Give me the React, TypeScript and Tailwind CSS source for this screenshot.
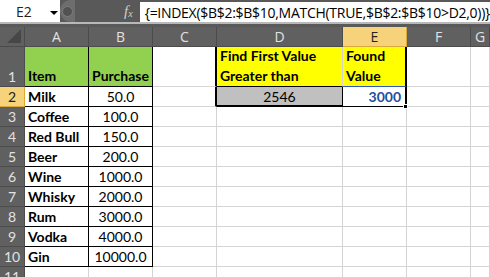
import React from "react";

const items: [string, string][] = [
  ["Milk", "50.0"],
  ["Coffee", "100.0"],
  ["Red Bull", "150.0"],
  ["Beer", "200.0"],
  ["Wine", "1000.0"],
  ["Whisky", "2000.0"],
  ["Rum", "3000.0"],
  ["Vodka", "4000.0"],
  ["Gin", "10000.0"],
];

const cellFont = { fontFamily: "Lato, 'Liberation Sans', sans-serif" };

const RowHead = ({ n, active = false, tall = false }: { n: number; active?: boolean; tall?: boolean }) => (
  <div
    className={`flex justify-center border-r border-b text-[14px] leading-[19px] ${tall ? "items-end" : "items-center"} ${
      active ? "bg-[#f6d27a] text-[#222] border-[#d9a93c]" : "bg-[#606060] text-[#e2e2e2] border-[#4c4c4c]"
    }`}
  >
    {n}
  </div>
);

const Grid = () => <div className="border-r border-b border-[#d4d4d4]" />;

export default function App() {
  return (
    <div className="w-[490px] h-[277px] overflow-hidden bg-white" style={{ fontFamily: "'Open Sans', sans-serif" }}>
      {/* formula bar */}
      <div className="h-[22px] flex bg-[#595959]">
        <div className="w-[63px] bg-white flex items-center pl-[16px] text-[14px] text-[#222] relative">
          E2
          <span className="absolute left-[50px] top-[11px] w-0 h-0 border-l-[4px] border-r-[4px] border-t-[4px] border-l-transparent border-r-transparent border-t-black" />
        </div>
        <div className="w-[16px] h-[22px] rounded-l-full bg-[#6d6d6d] flex items-center justify-center">
          <div className="w-[11px] h-[11px] rounded-full bg-[#525252] border border-[#7d7d7d]" />
        </div>
        <div className="w-[68px] flex items-center justify-end pr-[7px] text-[#cfcfcf] italic" style={{ fontFamily: "'Liberation Serif', serif" }}>
          <span className="text-[15px]">f</span>
          <span className="text-[10px] mt-[4px]">x</span>
        </div>
        <div className="flex-1 mt-[2px] bg-white flex items-center pl-[5px] text-[14px] text-black whitespace-nowrap tracking-[-0.28px]">
          {"{=INDEX($B$2:$B$10,MATCH(TRUE,$B$2:$B$10>D2,0))}"}
        </div>
      </div>
      <div className="h-[2px] bg-[#b8b8b8]" />
      <div className="h-[3px] bg-[#595959]" />

      {/* sheet */}
      <div
        className="grid grid-cols-[25px_64px_64px_64px_126px_64px_64px_1fr] grid-rows-[20px_40px_repeat(11,20px)] text-black"
        style={cellFont}
      >
        {/* column headers */}
        <div className="bg-[#606060] border-r border-b border-[#4c4c4c] flex items-end justify-end p-[3px]">
          <span className="w-0 h-0 border-b-[14px] border-l-[14px] border-b-[#474747] border-l-transparent" />
        </div>
        {["A", "B", "C", "D", "E", "F", "G"].map((c) => (
          <div
            key={c}
            className={`flex items-center justify-center border-r border-b text-[14px] ${
              c === "E" ? "bg-[#f6d27a] text-[#222] border-[#d9a93c]" : "bg-[#606060] text-[#e2e2e2] border-[#4c4c4c]"
            }`}
            style={{ fontFamily: "'Open Sans', sans-serif" }}
          >
            {c}
          </div>
        ))}

        {/* row 1 */}
        <RowHead n={1} tall />
        <div className="bg-[#92d050] border-r border-b border-black flex items-end pl-[3px] font-bold text-[14px] leading-[20px]">Item</div>
        <div className="bg-[#92d050] border-r border-b border-black flex items-end pl-[3px] font-bold text-[14px] leading-[20px]">Purchase</div>
        <div className="border-r-2 border-r-black border-b border-b-[#d4d4d4]" />
        <div className="bg-[#ffff00] border-r border-r-[#d4d4d4] border-b border-b-black flex items-end pl-[3px] font-bold text-[14px] leading-[20px]">
          Find First Value
          <br />
          Greater than
        </div>
        <div className="bg-[#ffff00] border-r-2 border-r-black border-b border-b-[#2b55c8] flex items-end pl-[3px] font-bold text-[14px] leading-[20px]">
          Found
          <br />
          Value
        </div>
        <Grid />
        <Grid />

        {/* row 2 */}
        <RowHead n={2} active />
        <div className="border-r border-b border-black flex items-center pl-[3px] font-bold text-[14px]">Milk</div>
        <div className="border-r border-b border-black flex items-center justify-center text-[14px]">50.0</div>
        <div className="border-r-2 border-r-black border-b border-b-[#d4d4d4]" />
        <div className="bg-[#c0c0c0] border-r border-r-black border-b-2 border-b-black flex items-center justify-center text-[14px]">2546</div>
        <div className="relative border-r-2 border-r-black border-b border-b-black flex items-center justify-end pr-[4px] font-bold text-[14px] text-[#1f4e9c]">
          3000
          <span className="absolute -right-[3px] -bottom-[3px] w-[5px] h-[5px] bg-black border border-white" />
        </div>
        <Grid />
        <Grid />

        {/* rows 3-10 */}
        {items.slice(1).map(([name, val], i) => (
          <React.Fragment key={name}>
            <RowHead n={i + 3} />
            <div className="border-r border-b border-black flex items-center pl-[3px] font-bold text-[14px]">{name}</div>
            <div className="border-r border-b border-black flex items-center justify-center text-[14px]">{val}</div>
            <Grid />
            <Grid />
            <Grid />
            <Grid />
            <Grid />
          </React.Fragment>
        ))}

        {/* row 11 */}
        <RowHead n={11} />
        <Grid />
        <Grid />
        <Grid />
        <Grid />
        <Grid />
        <Grid />
        <Grid />
      </div>
    </div>
  );
}
